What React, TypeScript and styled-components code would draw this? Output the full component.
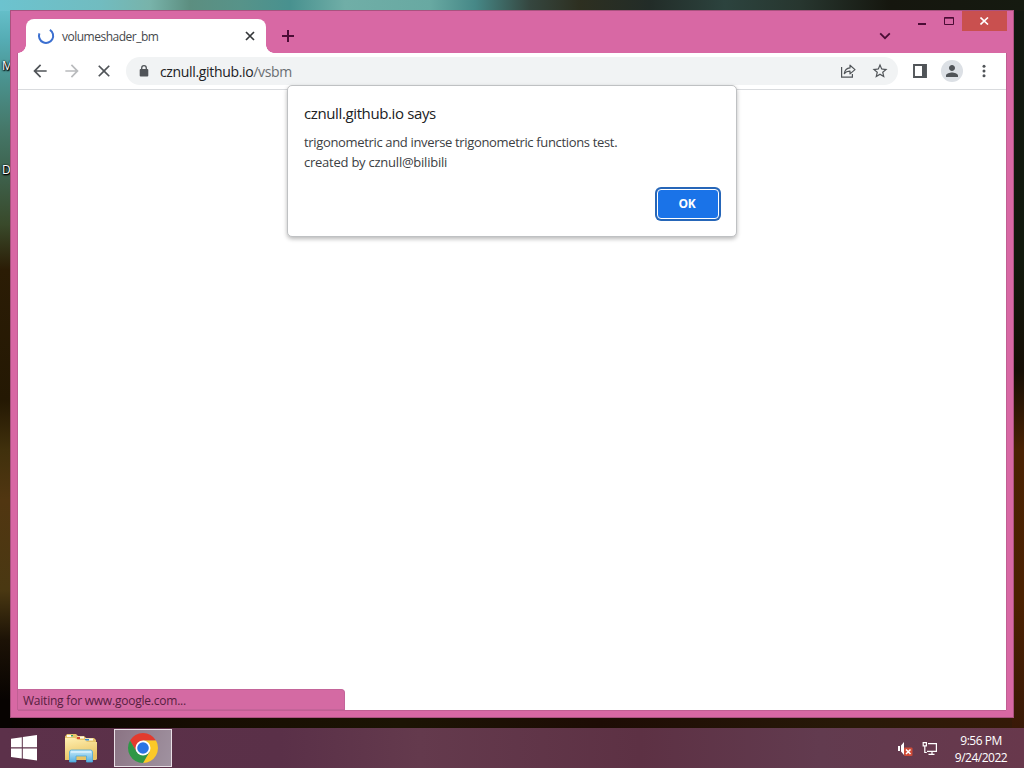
import React from "react";
import styled, { createGlobalStyle } from "styled-components";

const GlobalStyle = createGlobalStyle`
  * {
    box-sizing: border-box;
  }

  body {
    margin: 0;
    overflow: hidden;
    font-family: "Open Sans", "Noto Sans", sans-serif;
  }

  svg {
    display: block;
    flex-shrink: 0;
  }
`;

const Desktop = styled.div`
  position: relative;
  display: flex;
  flex-direction: column;
  width: 1024px;
  height: 768px;
  overflow: hidden;
`;

const Wallpaper = styled.main`
  height: 728px;
  padding: 10px;
  background-color: #150c04;
  background-image:
    linear-gradient(90deg, #6cc3cf 0, #71bcc0 100px, #78b3aa 150px, #5c8e80 190px, #579389 240px, #48918f 290px, #70aea7 345px, #68a9a2 430px, #468887 475px, #35463f 530px, #2d2f20 580px, #222c28 650px, #2c433e 725px, #27362f 800px, #15160e 890px, #151a10 1024px),
    linear-gradient(180deg, #6ac5d0 0, #55acb4 40px, #4a928e 80px, #457768 130px, #3e6450 170px, #39492a 225px, #2b1c05 270px, #241803 400px, #40300c 450px, #513611 500px, #4a3812 590px, #1c1206 640px, #070301 700px),
    linear-gradient(180deg, #111810 0, #11190d 260px, #150e05 370px, #4a2203 450px, #4b2101 600px, #391907 728px),
    linear-gradient(90deg, #070200 0, #170d02 200px, #1c1404 400px, #1e0c05 600px, #281908 850px, #351a08 1024px);
  background-size: 100% 11px, 12px 100%, 12px 100%, 100% 12px;
  background-position: 0 0, 0 0, 100% 0, 0 100%;
  background-repeat: no-repeat;
`;

const DesktopLabel = styled.span<{ $top: number }>`
  position: absolute;
  top: ${(props) => props.$top}px;
  left: 2px;
  color: #fff;
  font-size: 12px;
  line-height: 16px;
  text-shadow: 0 1px 2px #000, 1px 1px 1px #000, 0 0 2px #000;
`;

const Window = styled.section`
  position: relative;
  display: flex;
  flex-direction: column;
  width: 1004px;
  height: 708px;
  background: #d868a4;
  border: 1px solid #a9527f;
`;

const TitleBar = styled.header`
  display: flex;
  align-items: flex-start;
  height: 42px;
  padding: 0 6px 0 15px;
  color: #4b0c35;
`;

const Tab = styled.div`
  position: relative;
  display: flex;
  align-items: center;
  width: 240px;
  height: 34px;
  margin-top: 8px;
  padding: 0 9px 0 11px;
  border-radius: 8px 8px 0 0;
  background: #fff;
  color: #45484c;

  &::before,
  &::after {
    content: "";
    position: absolute;
    bottom: 0;
    width: 8px;
    height: 8px;
  }

  &::before {
    left: -8px;
    background: radial-gradient(circle at 0 0, transparent 7.5px, #fff 8px);
  }

  &::after {
    right: -8px;
    background: radial-gradient(circle at 100% 0, transparent 7.5px, #fff 8px);
  }
`;

const TabTitle = styled.span`
  flex: 1;
  margin-left: 7px;
  padding-top: 1px;
  font-size: 12px;
  letter-spacing: -0.5px;
  line-height: 16px;
`;

const IconButton = styled.button<{ $color?: string }>`
  display: flex;
  align-items: center;
  justify-content: center;
  flex-shrink: 0;
  width: 28px;
  height: 28px;
  padding: 0;
  border: 0;
  background: transparent;
  color: ${(props) => props.$color || "#505458"};
`;

const NewTab = styled(IconButton)`
  margin: 11px 0 0 8px;
`;

const TabSearch = styled(IconButton)`
  margin: 11px 10px 0 auto;
`;

const WindowControl = styled.button<{ $width: number; $close?: boolean }>`
  display: flex;
  align-items: center;
  justify-content: center;
  width: ${(props) => props.$width}px;
  height: 20px;
  padding: 0;
  border: 0;
  background: ${(props) => (props.$close ? "#c9504f" : "transparent")};
  color: ${(props) => (props.$close ? "#fff" : "#4b0c35")};
`;

const Client = styled.div`
  display: flex;
  flex: 1;
  flex-direction: column;
  margin: 0 7px 7px;
  background: #fff;
  box-shadow: -1px 0 #c05f93, 1px 0 #c05f93, 0 1px #c05f93;
`;

const Toolbar = styled.nav`
  display: flex;
  align-items: center;
  gap: 4px;
  height: 37px;
  padding: 0 8px;
  border-bottom: 1px solid #d9dbde;
`;

const AddressBar = styled.div`
  display: flex;
  align-items: center;
  gap: 4px;
  flex: 1;
  height: 28px;
  margin: 0 4px;
  padding: 0 4px 0 10px;
  border-radius: 14px;
  background: #f1f3f4;
`;

const Url = styled.span`
  flex: 1;
  margin-left: 4px;
  padding-top: 1px;
  color: #202124;
  font-size: 14px;
  letter-spacing: -0.34px;
  line-height: 20px;
`;

const UrlPath = styled.span`
  color: #6a6e72;
`;

const Avatar = styled.span`
  display: flex;
  align-items: center;
  justify-content: center;
  width: 22px;
  height: 22px;
  border-radius: 50%;
  background: #dce0e5;
`;

const Page = styled.div`
  display: flex;
  flex: 1;
  align-items: flex-end;
`;

const StatusBubble = styled.div`
  width: 327px;
  height: 21px;
  padding-left: 5px;
  border: 1px solid #c4659a;
  border-left: 0;
  border-radius: 0 4px 0 0;
  background: #d46aa3;
  color: #57203f;
  font-size: 12px;
  letter-spacing: -0.22px;
  line-height: 21px;
`;

const Dialog = styled.div`
  position: absolute;
  top: 74px;
  left: 276px;
  display: flex;
  flex-direction: column;
  width: 450px;
  height: 152px;
  padding: 16px 16px 16px;
  border: 1px solid #bfc1c3;
  border-radius: 5px;
  background: #fff;
  box-shadow: 0 2px 4px rgba(0, 0, 0, 0.28);
`;

const DialogTitle = styled.h1`
  margin: 0 0 8px;
  color: #202124;
  font-size: 15px;
  font-weight: 400;
  letter-spacing: -0.38px;
  line-height: 22px;
`;

const DialogText = styled.p<{ $spacing: number }>`
  margin: 0;
  color: #3c4043;
  font-size: 13px;
  letter-spacing: ${(props) => props.$spacing}px;
  line-height: 20px;
`;

const OkButton = styled.button`
  align-self: flex-end;
  width: 62px;
  height: 30px;
  margin: auto 1px 1px 0;
  padding: 0 2px 0 0;
  border: 1px solid #fff;
  border-radius: 4px;
  background: #1a73e8;
  box-shadow: 0 0 0 2px #2666b8;
  color: #fff;
  font-family: inherit;
  font-size: 12px;
  font-weight: 700;
  letter-spacing: -0.2px;
  line-height: 28px;
`;

const Taskbar = styled.footer`
  display: flex;
  align-items: center;
  height: 40px;
  padding-right: 16px;
  background: linear-gradient(90deg, #5c314a 0, #5a3048 280px, #643a4d 420px, #5d3144 640px, #623b4f 820px, #68384c 1024px);
`;

const TaskButton = styled.button<{ $width: number; $active?: boolean }>`
  display: flex;
  align-items: center;
  justify-content: center;
  width: ${(props) => props.$width}px;
  height: 38px;
  padding: 0;
  border: ${(props) => (props.$active ? "1px solid #e9dfe6" : "0")};
  background: ${(props) => (props.$active ? "linear-gradient(110deg, #8b7484, #a092a0)" : "transparent")};
`;

const Tray = styled.div`
  display: flex;
  align-items: center;
  gap: 9px;
  margin-left: auto;
`;

const Clock = styled.time`
  width: 54px;
  margin-left: 7px;
  padding-top: 2px;
  color: #fff;
  font-size: 12px;
  letter-spacing: -0.5px;
  line-height: 17px;
  text-align: center;
  white-space: nowrap;
`;

const MaterialIcon = ({ d, size = 20 }: { d: string; size?: number }) => (
  <svg width={size} height={size} viewBox="0 0 24 24" fill="currentColor">
    <path d={d} />
  </svg>
);

const ChromeIcon = () => (
  <svg width="30" height="30" viewBox="0 0 48 48">
    <path d="M3.22 12A24 24 0 0 1 44.78 12H24L13.61 30Z" fill="#e33b2e" />
    <path d="M44.78 12A24 24 0 0 1 24 48L34.39 30 24 12Z" fill="#fcc928" />
    <path d="M24 48A24 24 0 0 1 3.22 12L13.61 30H34.39Z" fill="#2f9746" />
    <circle cx="24" cy="24" r="12" fill="#fff" />
    <circle cx="24" cy="24" r="9.3" fill="#2b74e4" />
  </svg>
);

const ExplorerIcon = () => (
  <svg width="34" height="30" viewBox="0 0 34 30">
    <defs>
      <linearGradient id="folder" x1="0" y1="0" x2="0.3" y2="1">
        <stop offset="0" stopColor="#fff0b2" />
        <stop offset="1" stopColor="#e9c464" />
      </linearGradient>
      <linearGradient id="stand" x1="0" y1="0" x2="0" y2="1">
        <stop offset="0" stopColor="#c9ecf9" />
        <stop offset="1" stopColor="#55aee0" />
      </linearGradient>
    </defs>
    <path d="M1 3.5 3 1h9l2 2h6l2 2h8l2 2v20H1Z" fill="#e7c56b" />
    <path d="M3 2h6v2H3zM13 3.5h7v2h-7zM21 5.5h8v2h-8z" fill="#fffbed" />
    <path d="M7 2h2v1.5H7z" fill="#37a75b" />
    <path d="M13 4h3v2h-3z" fill="#d84d35" />
    <path d="M21 6h4v1.5h-4z" fill="#338bd0" />
    <path d="M1 5h10l3 2h7l2 2h10v17.5H1Z" fill="url(#folder)" />
    <path d="M5.5 29V19q0-2 2-2h19q2 0 2 2v10h-6v-6H12v6Z" fill="url(#stand)" stroke="#4daada" strokeWidth="0.8" />
    <path d="M7 19h20" stroke="#effaff" strokeWidth="1" />
  </svg>
);

const App: React.FC = () => {
  return (
    <Desktop>
      <GlobalStyle />
      <Wallpaper>
        <DesktopLabel $top={58}>M</DesktopLabel>
        <DesktopLabel $top={162}>D</DesktopLabel>

        <Window>
          <TitleBar>
            <Tab>
              <svg width="18" height="18" viewBox="0 0 18 18" fill="none">
                <path d="M12.9 2.8A7.1 7.1 0 1 1 2.4 6.3" stroke="#3b6fd0" strokeWidth="2" />
              </svg>
              <TabTitle>volumeshader_bm</TabTitle>
              <svg width="14" height="14" viewBox="0 0 14 14" stroke="#34373a" strokeWidth="1.7">
                <path d="M3 3l8 8M11 3l-8 8" />
              </svg>
            </Tab>
            <NewTab $color="#4b0c35" aria-label="New tab">
              <svg width="12" height="12" viewBox="0 0 12 12" stroke="currentColor" strokeWidth="2">
                <path d="M6 0v12M0 6h12" />
              </svg>
            </NewTab>
            <TabSearch $color="#4b0c35" aria-label="Search tabs">
              <svg width="12" height="8" viewBox="0 0 12 8" fill="none" stroke="currentColor" strokeWidth="1.8">
                <path d="M1.2 1.4 6 6.2l4.8-4.8" />
              </svg>
            </TabSearch>
            <WindowControl $width={27} aria-label="Minimize">
              <svg width="9" height="10" viewBox="0 0 9 10" fill="currentColor">
                <path d="M0 7h8v2H0z" />
              </svg>
            </WindowControl>
            <WindowControl $width={26} aria-label="Maximize">
              <svg width="10" height="8" viewBox="0 0 10 8" fill="none" stroke="currentColor">
                <path d="M.5.5h9v7h-9zM0 1.2h10" />
              </svg>
            </WindowControl>
            <WindowControl $width={45} $close aria-label="Close">
              <svg width="9" height="8" viewBox="0 0 9 8" stroke="currentColor" strokeWidth="1.6">
                <path d="M.5.5l7.5 7M8 .5l-7.5 7" />
              </svg>
            </WindowControl>
          </TitleBar>

          <Client>
            <Toolbar>
              <IconButton aria-label="Back">
                <MaterialIcon d="M20 11H7.83l5.59-5.59L12 4l-8 8 8 8 1.41-1.41L7.83 13H20v-2z" />
              </IconButton>
              <IconButton $color="#b9bbbd" aria-label="Forward">
                <MaterialIcon d="M12 4l-1.41 1.41L16.17 11H4v2h12.17l-5.58 5.59L12 20l8-8z" />
              </IconButton>
              <IconButton aria-label="Stop">
                <MaterialIcon d="M19 6.41 17.59 5 12 10.59 6.41 5 5 6.41 10.59 12 5 17.59 6.41 19 12 13.41 17.59 19 19 17.59 13.41 12z" />
              </IconButton>
              <AddressBar>
                <svg width="16" height="16" viewBox="0 0 16 16">
                  <rect x="3.7" y="6" width="8.6" height="7.5" rx="1" fill="#505458" />
                  <path d="M5.7 6.5V5a2.3 2.3 0 0 1 4.6 0v1.5" fill="none" stroke="#505458" strokeWidth="1.3" />
                </svg>
                <Url>
                  cznull.github.io<UrlPath>/vsbm</UrlPath>
                </Url>
                <IconButton aria-label="Share">
                  <svg width="16" height="16" viewBox="0 0 16 16" fill="none" stroke="currentColor" strokeWidth="1.2">
                    <path d="M1.6 4v10.2h10.8V11" />
                    <path d="M4.3 10.6C4.8 7 6.8 5.2 10 4.9V2.2l5 4.4-5 4.3V8.2C7.6 8.1 5.8 8.8 4.3 10.6Z" strokeLinejoin="round" />
                  </svg>
                </IconButton>
                <IconButton aria-label="Bookmark">
                  <MaterialIcon
                    size={18}
                    d="M22 9.24l-7.19-.62L12 2 9.19 8.63 2 9.24l5.46 4.73L5.82 21 12 17.27 18.18 21l-1.63-7.03L22 9.24zM12 15.4l-3.76 2.27 1-4.28-3.32-2.88 4.38-.38L12 6.1l1.71 4.04 4.38.38-3.32 2.88 1 4.28L12 15.4z"
                  />
                </IconButton>
              </AddressBar>
              <IconButton aria-label="Side panel">
                <svg width="14" height="14" viewBox="0 0 14 14">
                  <path d="M1 1h12v12H1z" fill="none" stroke="currentColor" strokeWidth="1.9" />
                  <path d="M9 1h4v12H9z" fill="currentColor" />
                </svg>
              </IconButton>
              <IconButton aria-label="Profile">
                <Avatar>
                  <MaterialIcon
                    size={18}
                    d="M12 12c2.21 0 4-1.79 4-4s-1.79-4-4-4-4 1.79-4 4 1.79 4 4 4zm0 2c-2.67 0-8 1.34-8 4v2h16v-2c0-2.66-5.33-4-8-4z"
                  />
                </Avatar>
              </IconButton>
              <IconButton aria-label="Menu">
                <svg width="4" height="14" viewBox="0 0 4 14" fill="currentColor">
                  <circle cx="2" cy="2.2" r="1.5" />
                  <circle cx="2" cy="7" r="1.5" />
                  <circle cx="2" cy="11.8" r="1.5" />
                </svg>
              </IconButton>
            </Toolbar>
            <Page>
              <StatusBubble>Waiting for www.google.com...</StatusBubble>
            </Page>
          </Client>

          <Dialog role="alertdialog">
            <DialogTitle>cznull.github.io says</DialogTitle>
            <DialogText $spacing={-0.34}>trigonometric and inverse trigonometric functions test.</DialogText>
            <DialogText $spacing={-0.24}>created by cznull@bilibili</DialogText>
            <OkButton>OK</OkButton>
          </Dialog>
        </Window>
      </Wallpaper>

      <Taskbar>
        <TaskButton $width={48} aria-label="Start">
          <svg width="26" height="26" viewBox="0 0 26 26" fill="#fff">
            <path d="M0 3.8 10.8 2.2V12.3H0zM11.8 2 26 0v12.3H11.8zM0 13.4h10.8v10L0 21.9zM11.8 13.4H26V25.5l-14.2-2z" />
          </svg>
        </TaskButton>
        <TaskButton $width={66} aria-label="File Explorer">
          <ExplorerIcon />
        </TaskButton>
        <TaskButton $width={58} $active aria-label="Chrome">
          <ChromeIcon />
        </TaskButton>
        <Tray>
          <svg width="15" height="15" viewBox="0 0 15 15">
            <path d="M0 5h2v5H0zM3 4.5 6 1v13l-3-3.5z" fill="#fff" />
            <rect x="6" y="6.5" width="8.5" height="8.5" rx="1" fill="#cf4b38" />
            <path d="M8 8.5l4.5 4.5M12.5 8.5L8 13" stroke="#fff" strokeWidth="1.5" />
          </svg>
          <svg width="16" height="15" viewBox="0 0 16 15" fill="none" stroke="#fff" strokeWidth="1.2">
            <path d="M6 2.6h8.4v7.8H5M10 10.5V13M6.5 13.4h6" />
            <path d="M1.2 1.6h3.2v3.2H1.2zM2.8 5v6.5h2" />
          </svg>
          <Clock>
            9:56 PM
            <br />
            9/24/2022
          </Clock>
        </Tray>
      </Taskbar>
    </Desktop>
  );
};

export default App;
